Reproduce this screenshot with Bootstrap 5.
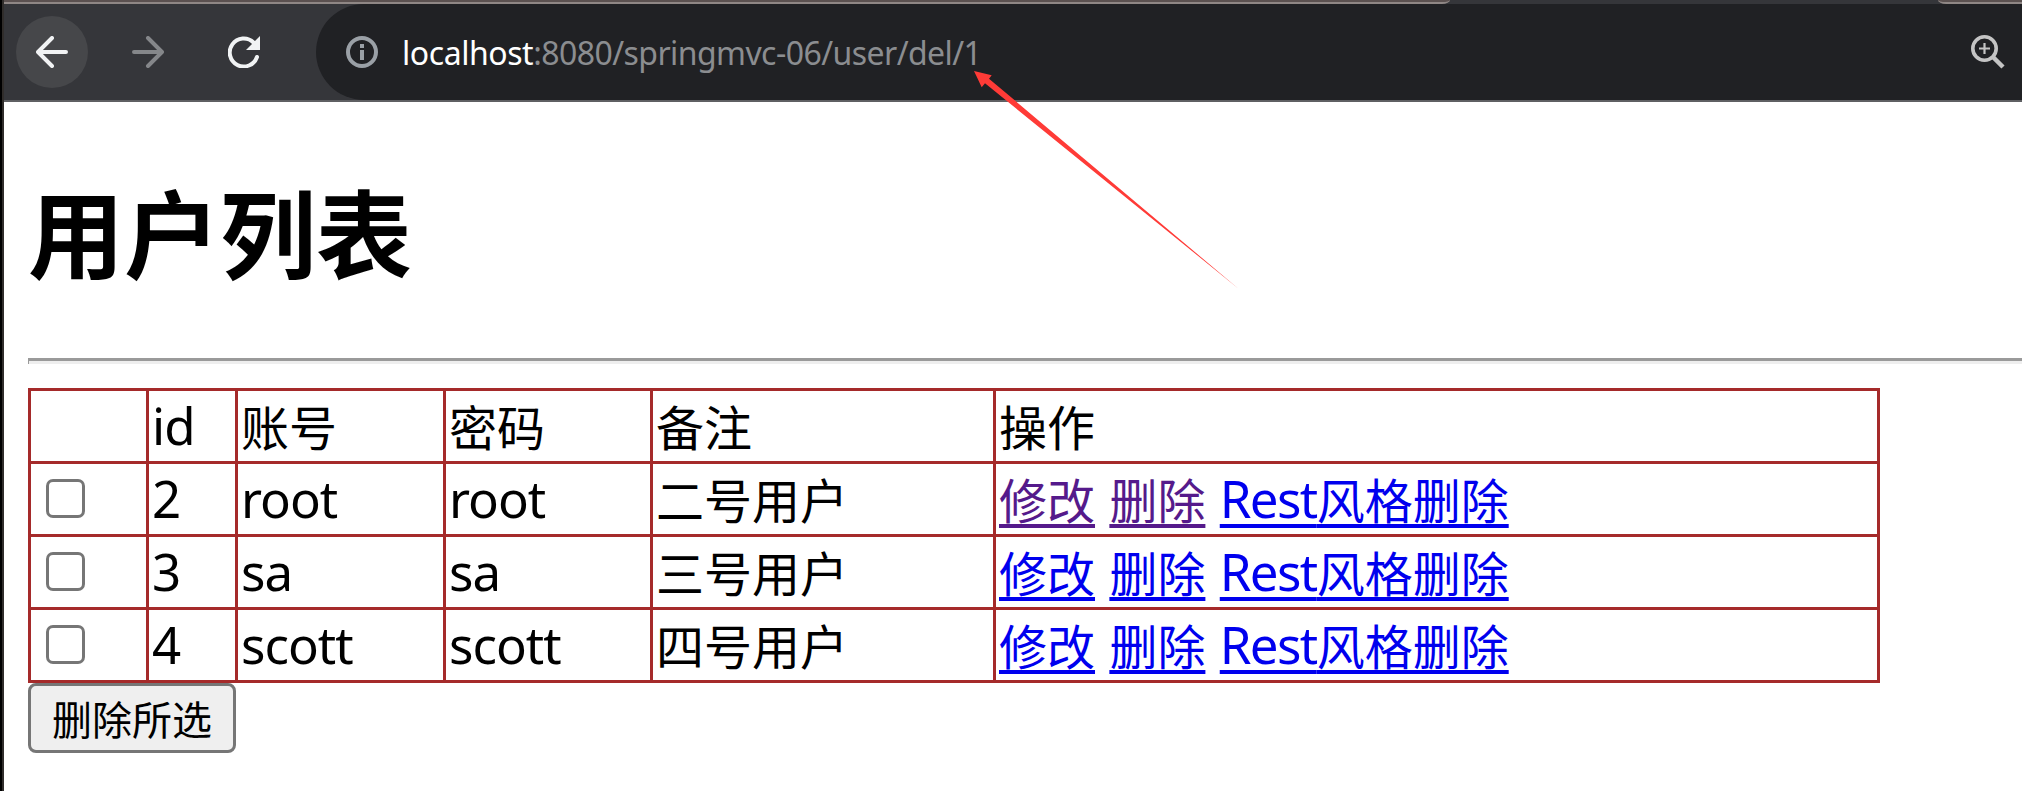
<!DOCTYPE html>
<html lang="zh-CN">
<head>
<meta charset="utf-8">
<title>用户列表</title>
<link href="https://cdn.jsdelivr.net/npm/bootstrap@5.3.0/dist/css/bootstrap.min.css" rel="stylesheet">
<style>
body{height:791px;overflow:hidden;background:#fff;color:#000;font-family:"Noto Sans","Noto Sans CJK SC",sans-serif}
.window-edge{width:4px;background:#302d2b;border-left:2px solid #000}
.tab-strip{height:4px;background:#35363a}
.tab-end{height:4px;background:#5b5150;border-bottom:2px solid #8f8785}
.tab-left{width:1446px;border-bottom-right-radius:8px 4px}
.tab-right{width:84px;border-bottom-left-radius:8px 4px}
.toolbar{height:98px;background:#35363a;border-bottom:2px solid #5f6063}
.round-btn{width:72px;height:72px}
.round-btn.lit{background:#46474a}
.omnibox{height:96px;margin-left:36px;border-radius:48px 0 0 48px;background:#202124;padding-left:30px}
.url{font-size:32px;line-height:44px;color:#8b8d90;margin-left:24px;padding-top:1px;letter-spacing:-.56px;white-space:pre}
.url b{font-weight:400;color:#fff;letter-spacing:-.45px}
.page{padding:64px 0 0 24px}
h1{font-size:96px;font-weight:700;line-height:128px;font-family:"Noto Sans CJK SC",sans-serif}
.rule{height:6px;margin:64px 0 24px;border-top:3px solid #9a9a9a;border-left:1px solid #9a9a9a;background:#eee}
.user-table{width:1852px;table-layout:fixed;border-collapse:collapse;font-family:"Noto Sans CJK SC",sans-serif;font-size:48px;line-height:64px;word-spacing:3.6px}
.user-table td{border:3px solid #a52a2a;padding:0 3px 2px;height:73px;white-space:nowrap}
.user-table a{color:#00e;text-decoration:underline;text-decoration-thickness:4px;text-underline-offset:5px;text-decoration-skip-ink:none}
.user-table a.seen{color:#551a8b}
.lat{font-family:"Noto Sans",sans-serif;font-size:51px;line-height:56px;letter-spacing:-1px;vertical-align:1px}
a .lat{letter-spacing:-1.6px}
.pick{width:39px;height:39px;border:3px solid #767676;border-radius:7px;appearance:none;background:#fff;display:block;margin-left:12px}
.del-btn{width:208px;height:70px;border:3px solid #767676;border-radius:8px;background:#efefef;font-family:"Noto Sans CJK SC",sans-serif;font-size:40px;line-height:60px;color:#000}
.pointer{left:970px;top:66px}
</style>
<script src="https://cdn.jsdelivr.net/npm/bootstrap@5.3.0/dist/js/bootstrap.bundle.min.js"></script>
</head>
<body class="d-flex position-relative">
<div class="window-edge flex-shrink-0"></div>
<div class="flex-grow-1">
  <div class="tab-strip d-flex justify-content-between"><div class="tab-end tab-left"></div><div class="tab-end tab-right"></div></div>
  <nav class="toolbar d-flex align-items-center ps-2 ms-0">
    <div class="d-flex gap-4 ms-1">
      <div class="round-btn lit rounded-circle d-flex align-items-center justify-content-center"><svg width="32" height="32" fill="none" stroke="#f1f3f4" stroke-width="4" stroke-linecap="round" stroke-linejoin="round"><path d="M30 16H3M16 2L2 16L16 30"/></svg></div>
      <div class="round-btn d-flex align-items-center justify-content-center"><svg width="32" height="32" fill="none" stroke="#85878a" stroke-width="4" stroke-linecap="round" stroke-linejoin="round"><path d="M2 16H29M16 2L30 16L16 30"/></svg></div>
      <div class="round-btn d-flex align-items-center justify-content-center"><svg width="32" height="32"><path d="M25.5 6.5A14 14 0 1 0 29 21" fill="none" stroke="#f1f3f4" stroke-width="4" stroke-linecap="round"/><path d="M32 0V14H18z" fill="#f1f3f4"/></svg></div>
    </div>
    <div class="omnibox flex-grow-1 d-flex align-items-center pe-3">
      <svg width="32" height="32"><circle cx="16" cy="16" r="14" fill="none" stroke="#9aa0a6" stroke-width="4"/><path d="M14 8h4v4h-4zM14 14h4v10h-4z" fill="#9aa0a6"/></svg>
      <div class="url"><b>localhost</b>:8080/springmvc-06/user/del/1</div>
      <svg class="ms-auto" width="36" height="36" fill="none" stroke="#c4c4c4"><circle cx="14.5" cy="14.5" r="11.7" stroke-width="3.6"/><path d="M23 23L33 33" stroke-width="4.5"/><path d="M14.5 9V20M9 14.5H20" stroke-width="2.2"/></svg>
    </div>
  </nav>
  <main class="page">
    <h1 class="m-0">用户列表</h1>
    <div class="rule"></div>
    <table class="user-table">
      <colgroup><col style="width:118px"><col style="width:89px"><col style="width:208px"><col style="width:207px"><col style="width:343px"><col></colgroup>
      <tbody>
      <tr><td></td><td><span class="lat">id</span></td><td>账号</td><td>密码</td><td>备注</td><td>操作</td></tr>
      <tr><td><input class="pick" type="checkbox"></td><td><span class="lat">2</span></td><td><span class="lat">root</span></td><td><span class="lat">root</span></td><td>二号用户</td><td><a class="seen" href="#">修改</a> <a class="seen" href="#">删除</a> <a href="#"><span class="lat">Rest</span>风格删除</a></td></tr>
      <tr><td><input class="pick" type="checkbox"></td><td><span class="lat">3</span></td><td><span class="lat">sa</span></td><td><span class="lat">sa</span></td><td>三号用户</td><td><a href="#">修改</a> <a href="#">删除</a> <a href="#"><span class="lat">Rest</span>风格删除</a></td></tr>
      <tr><td><input class="pick" type="checkbox"></td><td><span class="lat">4</span></td><td><span class="lat">scott</span></td><td><span class="lat">scott</span></td><td>四号用户</td><td><a href="#">修改</a> <a href="#">删除</a> <a href="#"><span class="lat">Rest</span>风格删除</a></td></tr>
      </tbody>
    </table>
    <button class="del-btn p-0 d-block" type="button">删除所选</button>
  </main>
</div>
<svg class="pointer position-absolute" width="280" height="230"><path d="M4 5L21.7 9.3L19 12.7L268.5 222.7L15 17.3L11.7 21.3z" fill="#ff3b37"/></svg>
</body>
</html>
